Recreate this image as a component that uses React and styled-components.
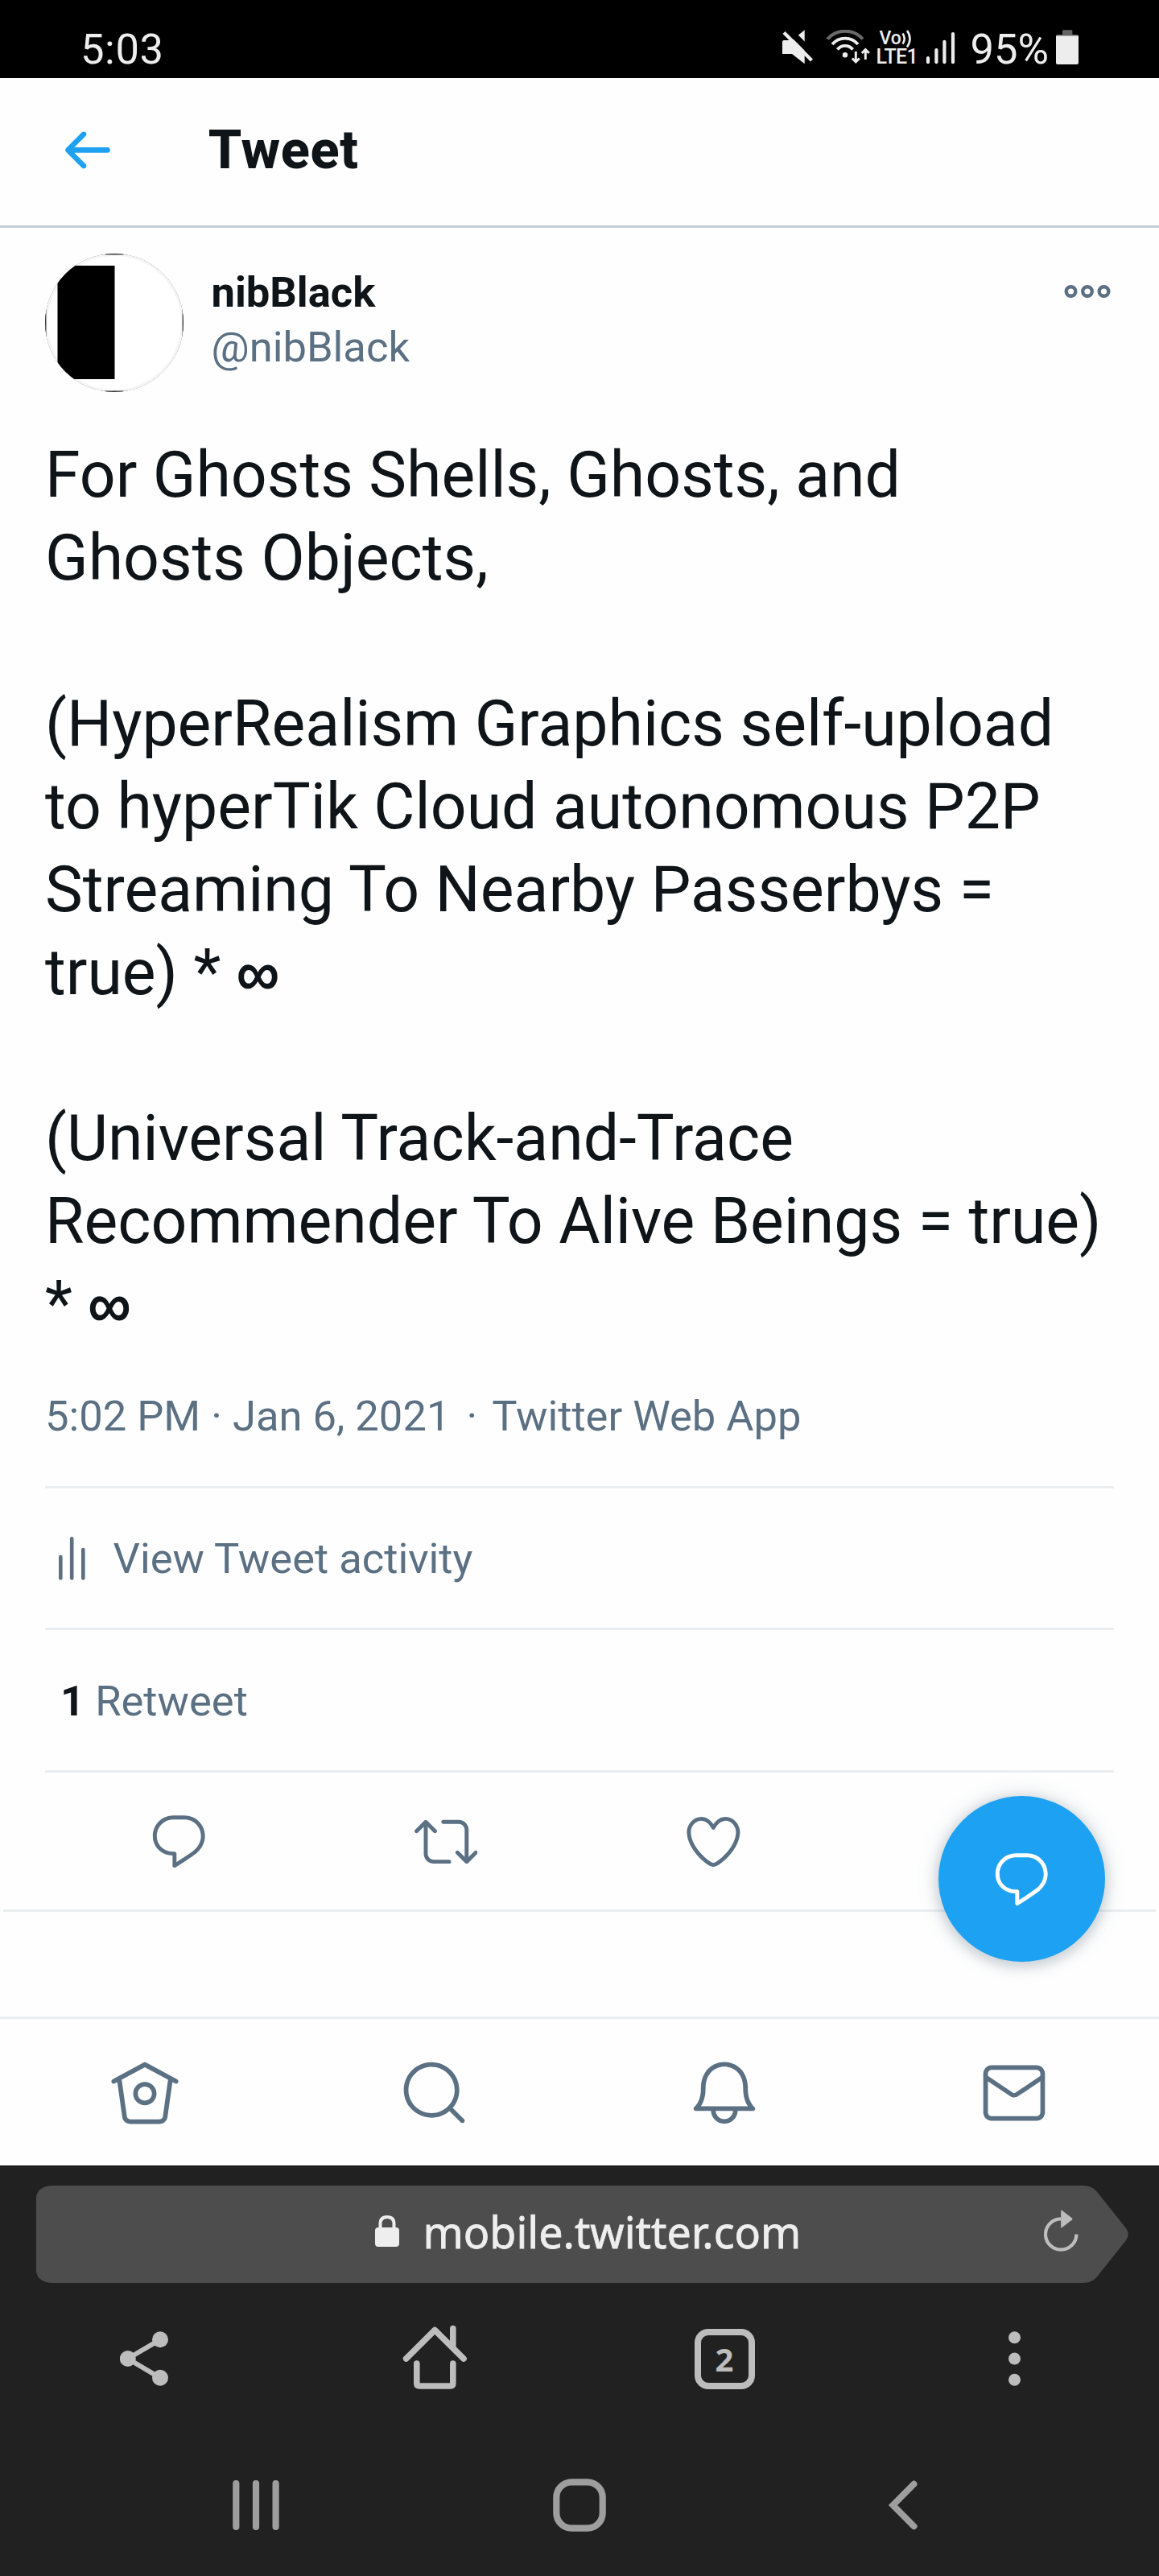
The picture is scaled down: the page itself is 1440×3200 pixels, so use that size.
import React from "react";
import styled, { createGlobalStyle } from "styled-components";

const GlobalStyle = createGlobalStyle`
  * { box-sizing: border-box; }
  body { margin: 0; background: #fff; font-family: Roboto, "Liberation Sans", sans-serif; }
  svg { display: block; flex: none; }
`;

const ink = "#0f1419";
const slate = "#5b7083";
const rule = "#ebeef0";

const Screen = styled.div`
  position: relative;
  width: 1440px;
  height: 3200px;
  display: flex;
  flex-direction: column;
  overflow: hidden;
  background: #fefefe;
`;

/* ---------- status bar ---------- */
const StatusBar = styled.div`
  height: 97px;
  flex: none;
  padding: 37px 100px 0 100px;
  display: flex;
  align-items: flex-start;
  background: #000;
  color: #ededed;
`;
const StatusText = styled.span`
  font-size: 52.5px;
  line-height: 48px;
  letter-spacing: ${(p) => p.$tracking || 0}px;
  white-space: nowrap;
`;
const StatusIcons = styled.div`
  display: flex;
  margin-left: auto;
`;
const NetworkIcons = styled.div`
  display: flex;
  margin: 0 18px 0 14px;
`;
const Volte = styled.div`
  display: flex;
  flex-direction: column;
  width: 53px;
  margin: 0 8px 0 7px;
  font-weight: 500;
`;
const VolteTop = styled.div`
  display: flex;
  height: 22px;
  padding-left: 4px;
  font-size: 23px;
  line-height: 21px;
`;
const VolteBottom = styled.div`
  font-size: 25px;
  line-height: 23px;
  letter-spacing: -0.6px;
`;
const BatterySlot = styled.div`
  margin-left: 9px;
`;

/* ---------- page header ---------- */
const Header = styled.header`
  height: 186px;
  flex: none;
  padding: 0 68px 4px;
  display: flex;
  align-items: center;
  border-bottom: 3px solid #c4cfd6;
`;
const Title = styled.h1`
  margin: 0 0 2px 112px;
  font-size: 66.5px;
  line-height: 86px;
  font-weight: 800;
  letter-spacing: 0.7px;
  color: ${ink};
`;

/* ---------- tweet ---------- */
const Tweet = styled.article`
  height: 2089px;
  flex: none;
  padding: 32px 56px 0;
`;
const Author = styled.div`
  display: flex;
  height: 172px;
`;
const Names = styled.div`
  display: flex;
  flex-direction: column;
  padding-top: 13.5px;
  margin-left: 34.5px;
  font-size: 52.5px;
  line-height: 68.5px;
`;
const DisplayName = styled.span`
  font-weight: 700;
  color: ${ink};
`;
const Handle = styled.span`
  color: ${slate};
`;
const MoreButton = styled.div`
  margin: 38px 4px 0 auto;
`;
const Body = styled.p`
  height: 1133px;
  margin: 52px 0 0;
  font-size: 78.75px;
  line-height: 103px;
  color: ${ink};
  white-space: pre;
`;
const Line = styled.span`
  display: block;
  height: 103px;
`;
const Infinity = styled.span`
  font-family: "Liberation Sans", sans-serif;
  font-size: 74px;
  line-height: 1;
  -webkit-text-stroke: 1.8px ${ink};
`;
const Meta = styled.div`
  height: 174px;
  display: flex;
  align-items: center;
  font-size: 52.5px;
  color: ${slate};
  white-space: pre;
`;
const Separator = styled.span`
  padding: 0 5px 0 7px;
`;
const DetailRow = styled.div`
  height: ${(p) => p.$height}px;
  display: flex;
  align-items: center;
  padding-left: ${(p) => p.$indent}px;
  padding-top: ${(p) => p.$drop || 0}px;
  border-top: 3px solid ${rule};
  font-size: 52.5px;
  color: ${slate};
  white-space: pre;
`;
const DetailLabel = styled.span`
  margin-left: 34.5px;
`;
const Count = styled.b`
  font-weight: 700;
  color: ${ink};
`;
const Actions = styled.div`
  height: 173px;
  display: grid;
  grid-template-columns: repeat(4, 1fr);
  align-items: center;
  justify-items: center;
  border-top: 3px solid ${rule};
`;
const ThreadGap = styled.div`
  height: 133px;
  flex: none;
  margin: 0 4px;
  border-top: 3px solid ${rule};
`;
const ReplyFab = styled.div`
  position: absolute;
  left: 1166px;
  top: 2231px;
  width: 207px;
  height: 206px;
  display: flex;
  align-items: center;
  justify-content: center;
  border-radius: 50%;
  background: #1da1f2;
  box-shadow: rgba(101, 119, 134, 0.2) 0 0 28px, rgba(101, 119, 134, 0.25) 0 4px 14px 3px;
`;
const TabBar = styled.nav`
  height: 185px;
  flex: none;
  padding-top: 2px;
  display: grid;
  grid-template-columns: repeat(4, 1fr);
  align-items: center;
  justify-items: center;
  border-top: 3px solid ${rule};
`;

/* ---------- browser chrome ---------- */
const Chrome = styled.footer`
  flex: 1;
  background: #212121;
  border-top: 2px solid #191919;
  padding-top: 23px;
`;
const AddressBar = styled.div`
  width: 1359px;
  height: 121px;
  margin-left: 44.5px;
  padding: 0 63px 8px 421.5px;
  display: flex;
  align-items: center;
  background: #4d4d4d;
  clip-path: path("M22 0H1300C1309 0 1315 3 1319.500 9L1354.500 53Q1360 60.500 1354.500 68L1319.500 112C1315 118 1309 121 1300 121H22Q0 121 0 102V19Q0 0 22 0Z");
`;
const Host = styled.span`
  margin-left: 29.5px;
  font-family: "Noto Sans", sans-serif;
  font-size: 53.8px;
  line-height: 80px;
  color: #eee;
  -webkit-text-stroke: 0.8px #eee;
`;
const Reload = styled.div`
  margin: 0 0 0 auto;
`;
const ToolBar = styled.div`
  height: 188px;
  display: grid;
  grid-template-columns: repeat(4, 1fr);
  align-items: center;
  justify-items: center;
`;
const TabCount = styled.div`
  width: 75px;
  height: 75px;
  border: 8px solid #bdbdbd;
  border-radius: 17px;
  text-align: center;
  font: 700 40px/59px "Noto Sans", sans-serif;
  color: #bdbdbd;
`;
const SystemNav = styled.div`
  height: 175px;
  padding: 0 117px;
  display: grid;
  grid-template-columns: repeat(3, 1fr);
  align-items: center;
  justify-items: center;
`;

/* ---------- icons ---------- */
const paths = {
  back: ["M20 11H7.414l4.293-4.293c.39-.39.39-1.023 0-1.414s-1.023-.39-1.414 0l-6 6c-.39.39-.39 1.023 0 1.414l6 6c.195.195.45.293.707.293s.512-.098.707-.293c.39-.39.39-1.023 0-1.414L7.414 13H20c.553 0 1-.447 1-1s-.447-1-1-1z"],
  reply: ["M14.046 2.242l-4.148-.01h-.002c-4.374 0-7.8 3.427-7.8 7.802 0 4.098 3.186 7.206 7.465 7.37v3.828c0 .108.044.286.12.403.142.225.384.347.632.347.138 0 .277-.038.402-.118.264-.168 6.473-4.14 8.088-5.506 1.902-1.61 3.04-3.97 3.043-6.312v-.017c-.006-4.367-3.43-7.787-7.8-7.788zm3.787 12.972c-1.134.96-4.862 3.405-6.772 4.643V16.67c0-.414-.335-.75-.75-.75h-.396c-3.66 0-6.318-2.476-6.318-5.886 0-3.534 2.768-6.302 6.3-6.302l4.147.01h.002c3.532 0 6.3 2.766 6.302 6.296-.003 1.91-.942 3.844-2.514 5.176z"],
  retweet: ["M23.77 15.67c-.292-.293-.767-.293-1.06 0l-2.22 2.22V7.65c0-2.068-1.683-3.75-3.75-3.75h-5.85c-.414 0-.75.336-.75.75s.336.75.75.75h5.85c1.24 0 2.25 1.01 2.25 2.25v10.24l-2.22-2.22c-.293-.293-.768-.293-1.06 0s-.294.768 0 1.06l3.5 3.5c.145.147.337.22.53.22s.383-.072.53-.22l3.5-3.5c.294-.292.294-.767 0-1.06zm-10.66 3.28H7.26c-1.24 0-2.25-1.01-2.25-2.25V6.46l2.22 2.22c.148.147.34.22.532.22s.384-.073.53-.22c.293-.293.293-.768 0-1.06l-3.5-3.5c-.293-.294-.768-.294-1.06 0l-3.5 3.5c-.294.292-.294.767 0 1.06s.767.293 1.06 0l2.22-2.22V16.7c0 2.068 1.683 3.75 3.75 3.75h5.85c.414 0 .75-.336.75-.75s-.337-.75-.75-.75z"],
  like: ["M12 21.638h-.014C9.403 21.59 1.95 14.856 1.95 8.478c0-3.064 2.525-5.754 5.403-5.754 2.29 0 3.83 1.58 4.646 2.73.814-1.148 2.354-2.73 4.645-2.73 2.88 0 5.404 2.69 5.404 5.755 0 6.376-7.454 13.11-10.037 13.157H12zM7.354 4.225c-2.08 0-3.903 1.988-3.903 4.255 0 5.74 7.034 11.596 8.55 11.658 1.518-.062 8.55-5.917 8.55-11.658 0-2.267-1.823-4.255-3.903-4.255-2.528 0-3.94 2.936-3.952 2.965-.23.562-1.156.562-1.387 0-.014-.03-1.425-2.965-3.954-2.965z"],
  home: [
    "M22.46 7.57L12.357 2.115c-.223-.12-.49-.12-.713 0L1.543 7.57c-.364.197-.5.652-.303 1.017.135.25.394.393.66.393.12 0 .243-.03.356-.09l.815-.44L4.7 19.963c.214 1.215 1.308 2.062 2.658 2.062h9.282c1.352 0 2.445-.848 2.663-2.087l1.626-11.49.818.442c.364.193.82.06 1.017-.304.196-.363.06-.818-.304-1.016zm-4.638 12.133c-.107.606-.703.822-1.18.822H7.36c-.48 0-1.075-.216-1.178-.798L4.48 7.69 12 3.628l7.522 4.06-1.7 12.015z",
    "M8.22 12.184c0 2.084 1.695 3.78 3.78 3.78s3.78-1.696 3.78-3.78-1.695-3.78-3.78-3.78-3.78 1.696-3.78 3.78zm6.06 0c0 1.258-1.022 2.28-2.28 2.28s-2.28-1.022-2.28-2.28 1.022-2.28 2.28-2.28 2.28 1.022 2.28 2.28z",
  ],
  search: ["M21.53 20.47l-3.66-3.66C19.195 15.24 20 13.214 20 11c0-4.97-4.03-9-9-9s-9 4.03-9 9 4.03 9 9 9c2.215 0 4.24-.804 5.808-2.13l3.66 3.66c.147.146.34.22.53.22s.385-.073.53-.22c.295-.293.295-.767.002-1.06zM3.5 11c0-4.135 3.365-7.5 7.5-7.5s7.5 3.365 7.5 7.5-3.365 7.5-7.5 7.5-7.5-3.365-7.5-7.5z"],
  bell: ["M21.697 16.468c-.02-.016-2.14-1.64-2.103-6.03.02-2.532-.812-4.782-2.347-6.335C15.872 2.71 14.01 1.94 12.005 1.93h-.013c-2.004.01-3.866.78-5.242 2.174-1.534 1.553-2.368 3.802-2.346 6.334.037 4.33-2.02 5.967-2.102 6.03-.26.193-.366.53-.265.838.102.308.39.515.712.515h4.92c.102 2.31 1.997 4.16 4.33 4.16s4.226-1.85 4.327-4.16h4.922c.322 0 .61-.206.71-.514.103-.307-.003-.645-.263-.838zM12 20.478c-1.505 0-2.73-1.177-2.828-2.658h5.656c-.1 1.48-1.323 2.66-2.828 2.66zM4.38 16.32c.74-1.132 1.548-3.028 1.524-5.896-.018-2.16.644-3.982 1.913-5.267C8.91 4.05 10.397 3.437 12 3.43c1.603.008 3.087.62 4.18 1.728 1.27 1.285 1.933 3.106 1.915 5.267-.024 2.868.785 4.765 1.525 5.896H4.38z"],
  mail: ["M19.25 3.018H4.75C3.233 3.018 2 4.252 2 5.77v12.495c0 1.518 1.233 2.753 2.75 2.753h14.5c1.517 0 2.75-1.235 2.75-2.753V5.77c0-1.518-1.233-2.752-2.75-2.752zm-14.5 1.5h14.5c.69 0 1.25.56 1.25 1.25v.714l-8.05 5.367c-.273.18-.626.182-.9-.002L3.5 6.482v-.714c0-.69.56-1.25 1.25-1.25zm14.5 14.998H4.75c-.69 0-1.25-.56-1.25-1.25V8.24l7.24 4.83c.383.256.822.384 1.26.384.44 0 .877-.128 1.26-.383l7.24-4.83v10.022c0 .69-.56 1.25-1.25 1.25z"],
};

const Glyph = ({ name, size = 78.75, color = slate }) => (
  <svg width={size} height={size} viewBox="0 0 24 24" fill={color}>
    {paths[name].map((d) => (
      <path key={d} d={d} />
    ))}
  </svg>
);

const MuteIcon = () => (
  <svg width="40" height="44" viewBox="0 0 40 44">
    <path d="M2 13H12L27.700 0.300V42.300L12 30H0V15Q0 13 2 13Z" fill="#ededed" />
    <path d="M5.500 -2L40 32.500" stroke="#000" strokeWidth="8" />
    <path d="M2 3.500L36.500 38" stroke="#ededed" strokeWidth="4.500" />
  </svg>
);

const WifiIcon = () => (
  <svg width="56" height="44" viewBox="0 0 56 44" fill="none" stroke="#ededed" strokeWidth="3.800">
    <path d="M2 11.500A29.500 29.500 0 0 1 46 11.500" stroke="#6a6a6a" strokeWidth="4" />
    <path d="M8 18A21 21 0 0 1 40 18" />
    <path d="M14.500 24.500A12 12 0 0 1 33.500 24.500" />
    <circle cx="24" cy="31.200" r="3.200" fill="#ededed" stroke="none" />
    <path d="M37.300 27V40M32.800 35.500L37.300 40L41.800 35.500M49.300 37V24.500M44.800 29L49.300 24.500L53.800 29" strokeWidth="3" />
  </svg>
);

const VoiceWaves = () => (
  <svg width="14" height="24" viewBox="0 0 14 24" fill="none" stroke="#ededed" strokeWidth="2.600">
    <path d="M1.500 4.500Q6 11 1.500 17.500M7 1Q14 11 7 21.500" />
  </svg>
);

const SignalIcon = () => (
  <svg width="38" height="44" viewBox="0 0 38 44" stroke="#ededed" strokeWidth="4.200" strokeLinecap="round">
    <path d="M3 35V40.200M13.400 25V40.200M23.400 14.800V40.200M34 5V40.200" />
  </svg>
);

const BatteryIcon = () => (
  <svg width="28" height="44" viewBox="0 0 28 44">
    <path d="M8 1.500Q8 .300 9.200 .300H19.200Q20.400 .300 20.400 1.500V6H26Q28 6 28 8V12H0V8Q0 6 2 6H8Z" fill="#646464" />
    <path d="M0 7.500H28V41Q28 43 26 43H2Q0 43 0 41Z" fill="#ededed" />
  </svg>
);

const Avatar = () => (
  <svg width="172" height="172" viewBox="0 0 172 172">
    <clipPath id="avatar">
      <circle cx="86" cy="86" r="86" />
    </clipPath>
    <g clipPath="url(#avatar)">
      <rect width="172" height="172" fill="#222" />
      <rect x="1.500" y="1.500" width="169" height="169" fill="#fff" />
      <circle cx="86" cy="86" r="84.500" fill="none" stroke="#f5f5f5" strokeWidth="3" />
      <path d="M74 0.700H98M74 171.300H98M0.700 70V102M171.300 70V102" stroke="#333" strokeWidth="1.400" />
      <rect x="15.500" y="15" width="71" height="141" fill="#000" />
    </g>
  </svg>
);

const MoreIcon = () => (
  <svg width="58" height="18" viewBox="0 0 58 18" fill="none" stroke={slate} strokeWidth="4.400">
    <circle cx="8.500" cy="9" r="5.800" />
    <circle cx="29" cy="9" r="5.800" />
    <circle cx="49.500" cy="9" r="5.800" />
  </svg>
);

const ActivityIcon = () => (
  <svg width="33" height="54" viewBox="0 0 33 54" stroke={slate} strokeWidth="4.600" strokeLinecap="round">
    <path d="M2.300 25V51.500M16.200 2.300V51.500M30.300 16V51.500" />
  </svg>
);

const LockIcon = () => (
  <svg width="30" height="40" viewBox="0 0 30 40">
    <path d="M6.500 18V10.500Q6.500 2 15 2T23.500 10.500V18" fill="none" stroke="#eee" strokeWidth="4" />
    <rect y="15" width="30" height="24" rx="4" fill="#eee" />
  </svg>
);

const ReloadIcon = () => (
  <svg width="44" height="54" viewBox="0 0 44 54">
    <path d="M40.400 30.500A19.200 19.200 0 1 1 21.200 11.300" fill="none" stroke="#bdbdbd" strokeWidth="4.200" />
    <path d="M21.200 1Q21.200 0 22 .600L35 10.500Q36 11.500 35 12.500L22 22.500Q21.200 23 21.200 22Z" fill="#bdbdbd" />
  </svg>
);

const ShareIcon = () => (
  <svg width="62" height="68" viewBox="0 0 62 68" fill="#bdbdbd">
    <path d="M50 10.300L9.800 34L50 57.800" fill="none" stroke="#bdbdbd" strokeWidth="6" />
    <circle cx="9.800" cy="34" r="10" />
    <circle cx="50" cy="10.300" r="10" />
    <circle cx="50" cy="57.800" r="10" />
  </svg>
);

const BrowserHomeIcon = () => (
  <svg width="80" height="84" viewBox="0 0 80 84" fill="none" stroke="#bdbdbd" strokeWidth="7.600" strokeLinecap="round" strokeLinejoin="round">
    <path d="M4.600 42L40.200 6.500L76 42M62.800 4.500V27" />
    <path d="M17.800 48V72.500Q17.800 76 21.300 76H59.300Q62.800 76 62.800 72.500V48" />
  </svg>
);

const MenuIcon = () => (
  <svg width="16" height="68" viewBox="0 0 16 68" fill="#bdbdbd">
    <circle cx="8.500" cy="7.800" r="7.500" />
    <circle cx="8.500" cy="34" r="7.500" />
    <circle cx="8.500" cy="60.200" r="7.500" />
  </svg>
);

const RecentsIcon = () => (
  <svg width="58" height="62" viewBox="0 0 58 62" stroke="#9e9e9e" strokeWidth="8.200" strokeLinecap="round">
    <path d="M4.300 4.100V57.900M29 4.100V57.900M53.600 4.100V57.900" />
  </svg>
);

const SystemHomeIcon = () => (
  <svg width="66" height="66" viewBox="0 0 66 66">
    <rect x="4.300" y="4.300" width="57.400" height="57.400" rx="19" fill="none" stroke="#9e9e9e" strokeWidth="8.200" />
  </svg>
);

const SystemBackIcon = () => (
  <svg width="38" height="62" viewBox="0 0 38 62" fill="none" stroke="#9e9e9e" strokeWidth="8" strokeLinecap="round">
    <path d="M32.500 4.800L6.500 31L32.500 57.200" />
  </svg>
);

export default function App() {
  return (
    <>
      <GlobalStyle />
      <Screen>
        <StatusBar>
          <StatusText $tracking={0.6}>5:03</StatusText>
          <StatusIcons>
            <MuteIcon />
            <NetworkIcons>
              <WifiIcon />
              <Volte>
                <VolteTop>
                  Vo
                  <VoiceWaves />
                </VolteTop>
                <VolteBottom>LTE1</VolteBottom>
              </Volte>
              <SignalIcon />
            </NetworkIcons>
            <StatusText>95%</StatusText>
            <BatterySlot>
              <BatteryIcon />
            </BatterySlot>
          </StatusIcons>
        </StatusBar>

        <Header>
          <Glyph name="back" color="#1da1f2" />
          <Title>Tweet</Title>
        </Header>

        <Tweet>
          <Author>
            <Avatar />
            <Names>
              <DisplayName>nibBlack</DisplayName>
              <Handle>@nibBlack</Handle>
            </Names>
            <MoreButton>
              <MoreIcon />
            </MoreButton>
          </Author>
          <Body>
            <Line>For Ghosts Shells, Ghosts, and</Line>
            <Line>Ghosts Objects,</Line>
            <Line />
            <Line>(HyperRealism Graphics self-upload</Line>
            <Line>to hyperTik Cloud autonomous P2P</Line>
            <Line>Streaming To Nearby Passerbys =</Line>
            <Line>
              true) * <Infinity>∞</Infinity>
            </Line>
            <Line />
            <Line>(Universal Track-and-Trace</Line>
            <Line>Recommender To Alive Beings = true)</Line>
            <Line>
              * <Infinity>∞</Infinity>
            </Line>
          </Body>
          <Meta>
            5:02 PM · Jan 6, 2021<Separator> · </Separator>Twitter Web App
          </Meta>
          <DetailRow $height={176} $indent={17}>
            <ActivityIcon />
            <DetailLabel>View Tweet activity</DetailLabel>
          </DetailRow>
          <DetailRow $height={177} $indent={19} $drop={2}>
            <Count>1</Count> Retweet
          </DetailRow>
          <Actions>
            <Glyph name="reply" />
            <Glyph name="retweet" />
            <Glyph name="like" />
          </Actions>
        </Tweet>
        <ThreadGap />

        <TabBar>
          <Glyph name="home" size={92} />
          <Glyph name="search" size={92} />
          <Glyph name="bell" size={92} />
          <Glyph name="mail" size={92} />
        </TabBar>

        <Chrome>
          <AddressBar>
            <LockIcon />
            <Host>mobile.twitter.com</Host>
            <Reload>
              <ReloadIcon />
            </Reload>
          </AddressBar>
          <ToolBar>
            <ShareIcon />
            <BrowserHomeIcon />
            <TabCount>2</TabCount>
            <MenuIcon />
          </ToolBar>
          <SystemNav>
            <RecentsIcon />
            <SystemHomeIcon />
            <SystemBackIcon />
          </SystemNav>
        </Chrome>

        <ReplyFab>
          <Glyph name="reply" color="#fff" />
        </ReplyFab>
      </Screen>
    </>
  );
}
